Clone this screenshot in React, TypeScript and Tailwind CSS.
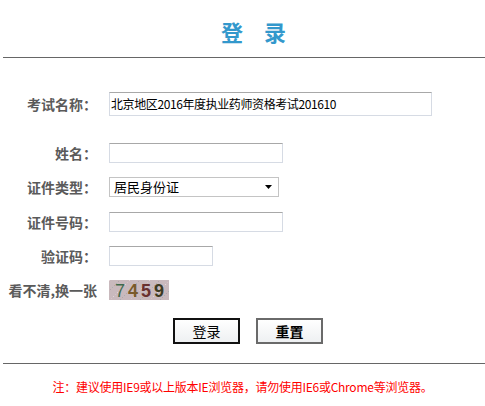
import React from "react";

const cjk = { fontFamily: '"Noto Sans CJK SC", "Noto Sans", sans-serif' };

function Label({ children }: { children: React.ReactNode }) {
  return (
    <div className="w-[97px] shrink-0 text-right text-[14px] font-bold leading-[20px] text-[#5a5a5a]" style={cjk}>
      {children}
    </div>
  );
}

function Captcha() {
  return (
    <svg width="60" height="20" viewBox="0 0 60 20">
      <rect width="60" height="20" fill="#c9b9bd" />
      {Array.from({ length: 120 }).map((_, i) => {
        const x = (i * 37) % 60;
        const y = (i * 53) % 20;
        const c = ["#e3d4d8", "#b2a7ab", "#d8c2c8", "#a9b0b2"][i % 4];
        return <rect key={i} x={x} y={y} width="1" height="1" fill={c} />;
      })}
      <text x="6" y="17" fontFamily="Liberation Sans, sans-serif" fontSize="18" fill="#3f6a4c">7</text>
      <text x="19" y="17" fontFamily="Liberation Sans, sans-serif" fontSize="18" fontWeight="bold" fill="#7a5a2a">4</text>
      <text x="32" y="17" fontFamily="Liberation Sans, sans-serif" fontSize="18" fontWeight="bold" fill="#6a3030">5</text>
      <text x="45" y="17" fontFamily="Liberation Sans, sans-serif" fontSize="18" fontWeight="bold" fill="#3d3a22">9</text>
    </svg>
  );
}

export default function App() {
  const inputCls =
    "border border-[#d6dbe4] border-t-[#a8a8a8] bg-white";
  return (
    <div className="w-[485px] h-[406px] bg-white overflow-hidden" style={cjk}>
      <div className="h-[57px] pt-[19px] flex justify-center">
        <div className="flex gap-[21px] pl-[22px] text-[22px] leading-[24px] font-bold text-[#3398cc]">
          <span>登</span>
          <span>录</span>
        </div>
      </div>
      <div className="ml-[3px] h-px bg-[#666666]" />

      <div className="mt-[29px] flex flex-col">
        <div className="h-[34px] flex items-center gap-[12px]">
          <Label>考试名称：</Label>
          <div className={`${inputCls} w-[323px] h-[24px] flex items-center pl-px text-[12px] tracking-[-0.4px] text-black whitespace-nowrap overflow-hidden`}>
            北京地区2016年度执业药师资格考试201610
          </div>
        </div>
        <div className="h-[34px] mt-[15px] flex items-center gap-[12px]">
          <Label>姓名：</Label>
          <div className={`${inputCls} w-[174px] h-[20px]`} />
        </div>
        <div className="h-[34px] flex items-center gap-[12px]">
          <Label>证件类型：</Label>
          <div className="border border-[#c4c4c4] w-[170px] h-[20px] flex items-center justify-between pl-[4px] pr-[6px] text-[13px] text-black">
            <span className="leading-[18px]">居民身份证</span>
            <svg width="7" height="4" viewBox="0 0 7 4"><path d="M0 0H7L3.5 4Z" fill="#000" /></svg>
          </div>
        </div>
        <div className="h-[35px] flex items-center gap-[12px]">
          <Label>证件号码：</Label>
          <div className={`${inputCls} w-[174px] h-[20px]`} />
        </div>
        <div className="h-[34px] flex items-center gap-[12px]">
          <Label>验证码：</Label>
          <div className={`${inputCls} w-[104px] h-[20px]`} />
        </div>
        <div className="h-[34px] flex items-center gap-[12px]">
          <Label>看不清,换一张</Label>
          <Captcha />
        </div>
      </div>

      <div className="mt-[11px] flex gap-[16px] pl-[173px]">
        <div className="w-[67px] h-[26px] border-2 border-[#111] bg-gradient-to-b from-white to-[#eef0f2] flex items-center justify-center text-[14px] text-black">
          登录
        </div>
        <div className="w-[67px] h-[26px] border-2 border-[#6a6a6a] bg-gradient-to-b from-white to-[#eef0f2] flex items-center justify-center text-[14px] text-black font-bold">
          重置
        </div>
      </div>

      <div className="mt-[19px] ml-[3px] h-px bg-[#666666]" />

      <div className="mt-[15px] text-center text-[12px] leading-[16px] tracking-[-0.25px] text-[#ff0000] whitespace-nowrap">
        注：建议使用IE9或以上版本IE浏览器，请勿使用IE6或Chrome等浏览器。
      </div>
    </div>
  );
}
